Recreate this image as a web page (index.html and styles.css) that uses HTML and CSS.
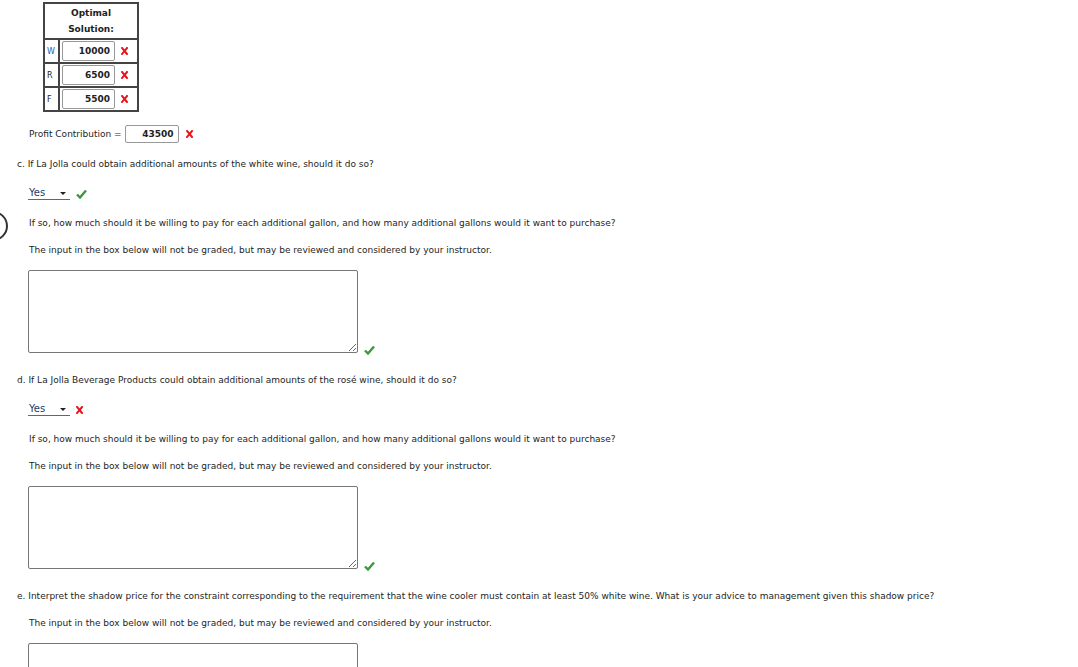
FILE: index.html
```html
<!DOCTYPE html>
<html lang="en">
<head>
  <meta charset="UTF-8">
  <title>La Jolla Beverage Products</title>
  <link rel="stylesheet" href="styles.css">
</head>
<body>
  <div class="side-handle"></div>
  <div class="page">
    <table class="solution">
      <tr class="head-row">
        <th colspan="2">Optimal<br>Solution:</th>
      </tr>
      <tr>
        <td class="var var-blue">W</td>
        <td class="cell"><input class="num" type="text" value="10000"><span class="mark wrong"></span></td>
      </tr>
      <tr>
        <td class="var">R</td>
        <td class="cell"><input class="num" type="text" value="6500"><span class="mark wrong"></span></td>
      </tr>
      <tr>
        <td class="var">F</td>
        <td class="cell"><input class="num" type="text" value="5500"><span class="mark wrong"></span></td>
      </tr>
    </table>

    <div class="profit">
      <span>Profit Contribution =</span>
      <input class="num num-wide" type="text" value="43500">
      <span class="mark wrong"></span>
    </div>

    <!-- part c -->
    <p class="question">c. If La Jolla could obtain additional amounts of the white wine, should it do so?</p>
    <div class="answer">
      <span class="dropdown">Yes</span>
      <span class="mark right"></span>
    </div>
    <p class="prompt">If so, how much should it be willing to pay for each additional gallon, and how many additional gallons would it want to purchase?</p>
    <p class="note">The input in the box below will not be graded, but may be reviewed and considered by your instructor.</p>
    <div class="response">
      <textarea></textarea>
      <span class="mark right"></span>
    </div>

    <!-- part d -->
    <p class="question">d. If La Jolla Beverage Products could obtain additional amounts of the rosé wine, should it do so?</p>
    <div class="answer">
      <span class="dropdown">Yes</span>
      <span class="mark wrong"></span>
    </div>
    <p class="prompt">If so, how much should it be willing to pay for each additional gallon, and how many additional gallons would it want to purchase?</p>
    <p class="note">The input in the box below will not be graded, but may be reviewed and considered by your instructor.</p>
    <div class="response">
      <textarea></textarea>
      <span class="mark right"></span>
    </div>

    <!-- part e -->
    <p class="question question-open">e. Interpret the shadow price for the constraint corresponding to the requirement that the wine cooler must contain at least 50% white wine. What is your advice to management given this shadow price?</p>
    <p class="note">The input in the box below will not be graded, but may be reviewed and considered by your instructor.</p>
    <div class="response">
      <textarea></textarea>
    </div>
  </div>

  <script>
    // icons for the grading marks
    const icons = {
      wrong: '<svg width="7" height="8" viewBox="0 0 7 8"><path d="M1 1 L6 7 M6 1 L1 7" stroke="#e8161b" stroke-width="2" stroke-linecap="square"/></svg>',
      right: '<svg width="11" height="10" viewBox="0 0 11 10"><path d="M1 5.5 L4 8.5 L10 1.5" fill="none" stroke="#3a9a3a" stroke-width="2.4"/></svg>'
    };
    document.querySelectorAll(".mark").forEach(el => {
      el.innerHTML = el.classList.contains("wrong") ? icons.wrong : icons.right;
    });
  </script>
</body>
</html>
```

FILE: styles.css
```css
body {
  margin: 0;
  font-family: "DejaVu Sans", Verdana, sans-serif;
  font-size: 9px;
  color: #1e1e1e;
  background: #fff;
  overflow: hidden;
}
.page {
  padding: 2px 0 0 17px;
}
p {
  margin: 0;
  line-height: 12px;
}

/* ---- optimal solution table ---- */
.solution {
  margin-left: 26px;
  border-collapse: collapse;
  border: 2px solid #444;
}
.solution th {
  padding: 0;
  font-weight: bold;
  line-height: 16px;
  text-align: center;
  border: 2px solid #444;
}
.solution tr {
  height: 24px;
}
.solution tr.head-row {
  height: 36px;
}
.solution td {
  border: 2px solid #444;
  padding: 0;
}
.var {
  width: 11px;
  padding-left: 2px !important;
  font-size: 8px;
}
.var-blue {
  color: #2060b0;
}
.cell {
  width: 75px;
  padding-left: 2px !important;
  white-space: nowrap;
}
.num {
  box-sizing: border-box;
  width: 53px;
  height: 20px;
  padding: 0 4px;
  border: 1px solid #999;
  border-radius: 2px;
  font-family: "DejaVu Sans", Verdana, sans-serif;
  font-size: 9px;
  font-weight: bold;
  color: #222;
  text-align: right;
  vertical-align: middle;
}
.mark {
  display: inline-block;
  vertical-align: middle;
  margin-left: 6px;
  line-height: 0;
}

/* ---- profit contribution ---- */
.profit {
  margin: 13px 0 0 12px;
  display: flex;
  align-items: center;
  gap: 3px;
}
.num-wide {
  width: 54px;
  height: 18px;
}
.profit .mark {
  margin-left: 4px;
}

/* ---- questions ---- */
.question {
  margin-top: 15px;
  margin-bottom: 17px;
}
.question-open {
  margin-bottom: 15px;
}
.answer {
  margin-left: 11px;
  height: 13px;
  margin-bottom: 17px;
  display: flex;
  align-items: center;
  gap: 6px;
}
.answer .mark {
  margin-left: 0;
}
.dropdown {
  position: relative;
  box-sizing: border-box;
  width: 42px;
  height: 13px;
  padding-left: 1px;
  line-height: 12px;
  font-size: 10px;
  color: #1b3a6b;
  border-bottom: 1px solid #3a6db0;
}
.dropdown::after {
  content: "";
  position: absolute;
  right: 4px;
  top: 5px;
  border-left: 3px solid transparent;
  border-right: 3px solid transparent;
  border-top: 3px solid #222;
}
.prompt {
  margin-left: 12px;
  margin-bottom: 15px;
}
.note {
  margin-left: 12px;
  margin-bottom: 14px;
}
.response {
  margin-left: 11px;
  display: flex;
  align-items: flex-end;
  gap: 6px;
  margin-bottom: 21px;
}
.response textarea {
  box-sizing: border-box;
  width: 330px;
  height: 83px;
  border: 1px solid #767676;
  border-radius: 2px;
  margin: 0;
}
.response .mark {
  margin: 0 0 -2px 0;
}

/* half circle cut by the left edge */
.side-handle {
  position: absolute;
  left: -22px;
  top: 211px;
  width: 26px;
  height: 26px;
  border: 2px solid #333;
  border-radius: 50%;
}
```
